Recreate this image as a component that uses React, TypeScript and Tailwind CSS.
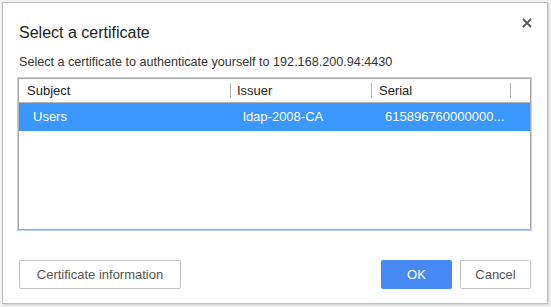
import React from 'react';

const font = { fontFamily: '"Liberation Sans", Arial, sans-serif' };

export default function App() {
  return (
    <div className="w-[551px] h-[307px] bg-[#f3f3f3] pt-[2px] pl-[2px]" style={font}>
      <div className="relative w-[546px] h-[302px] bg-white border border-[#bdbdbd] shadow-[1px_1px_2px_rgba(0,0,0,0.15)] flex flex-col">
        <button className="absolute right-[14px] top-[14px] w-[12px] h-[12px] flex items-center justify-center text-[#555]">
          <svg width="10" height="10" viewBox="0 0 10 10">
            <path d="M1 1L9 9M9 1L1 9" stroke="#5a5a5a" strokeWidth="1.8" />
          </svg>
        </button>
        <div className="pl-[16px] pt-[20px] h-[44px] text-[16px] leading-[20px] text-[#222]">Select a certificate</div>
        <div className="pl-[16px] h-[31px] text-[12.6px] leading-[30px] text-[#333]">
          Select a certificate to authenticate yourself to 192.168.200.94:4430
        </div>
        <div className="ml-[15px] w-[513px] h-[152px] border border-[#a9a9a9] shadow-[0_0_0_1px_#b9d3f8] bg-white text-[13px]">
          <div className="flex h-[24px] items-center text-[#222] border-b border-[#b4b4b4]">
            <div className="w-[212px] h-[15px] pl-[8px] leading-[15px] border-r border-[#b0b0b0]">Subject</div>
            <div className="w-[141px] h-[15px] pl-[6px] leading-[15px] border-r border-[#b0b0b0]">Issuer</div>
            <div className="w-[139px] h-[15px] pl-[7px] leading-[15px] border-r border-[#b0b0b0]">Serial</div>
          </div>
          <div className="flex h-[28px] items-center bg-[#3997fd] text-white">
            <div className="w-[212px] pl-[14px]">Users</div>
            <div className="w-[141px] pl-[12px]">ldap-2008-CA</div>
            <div className="w-[139px] pl-[13px] whitespace-nowrap">615896760000000...</div>
          </div>
        </div>
        <div className="flex items-center mt-[30px] px-[16px] text-[13px]">
          <button className="w-[162px] h-[29px] border border-[#c4c4c4] rounded-[2px] text-[#555] bg-white">
            Certificate information
          </button>
          <div className="flex-1" />
          <button className="w-[71px] h-[29px] rounded-[2px] bg-[#4789f3] text-white">OK</button>
          <button className="ml-[8px] w-[71px] h-[29px] border border-[#c4c4c4] rounded-[2px] text-[#555] bg-white">
            Cancel
          </button>
        </div>
      </div>
    </div>
  );
}
